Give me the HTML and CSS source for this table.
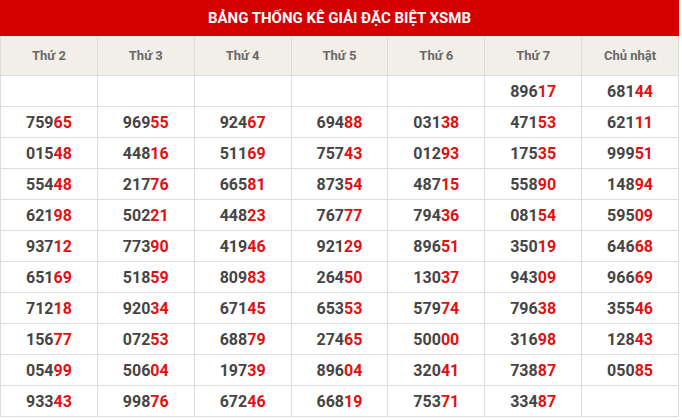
FILE: index.html
```html
<!DOCTYPE html>
<html lang="vi">
<head>
<meta charset="utf-8">
<link rel="stylesheet" href="styles.css">
</head>
<body>
<div class="box">
  <div class="title">BẢNG THỐNG KÊ GIẢI ĐẶC BIỆT XSMB</div>
  <table class="stats">
    <thead>
      <tr><th>Thứ 2</th><th>Thứ 3</th><th>Thứ 4</th><th>Thứ 5</th><th>Thứ 6</th><th>Thứ 7</th><th>Chủ nhật</th></tr>
    </thead>
    <tbody>
      <tr><td></td><td></td><td></td><td></td><td></td><td>896<em>17</em></td><td>681<em>44</em></td></tr>
      <tr><td>759<em>65</em></td><td>969<em>55</em></td><td>924<em>67</em></td><td>694<em>88</em></td><td>031<em>38</em></td><td>471<em>53</em></td><td>621<em>11</em></td></tr>
      <tr><td>015<em>48</em></td><td>448<em>16</em></td><td>511<em>69</em></td><td>757<em>43</em></td><td>012<em>93</em></td><td>175<em>35</em></td><td>999<em>51</em></td></tr>
      <tr><td>554<em>48</em></td><td>217<em>76</em></td><td>665<em>81</em></td><td>873<em>54</em></td><td>487<em>15</em></td><td>558<em>90</em></td><td>148<em>94</em></td></tr>
      <tr><td>621<em>98</em></td><td>502<em>21</em></td><td>448<em>23</em></td><td>767<em>77</em></td><td>794<em>36</em></td><td>081<em>54</em></td><td>595<em>09</em></td></tr>
      <tr><td>937<em>12</em></td><td>773<em>90</em></td><td>419<em>46</em></td><td>921<em>29</em></td><td>896<em>51</em></td><td>350<em>19</em></td><td>646<em>68</em></td></tr>
      <tr><td>651<em>69</em></td><td>518<em>59</em></td><td>809<em>83</em></td><td>264<em>50</em></td><td>130<em>37</em></td><td>943<em>09</em></td><td>966<em>69</em></td></tr>
      <tr><td>712<em>18</em></td><td>920<em>34</em></td><td>671<em>45</em></td><td>653<em>53</em></td><td>579<em>74</em></td><td>796<em>38</em></td><td>355<em>46</em></td></tr>
      <tr><td>156<em>77</em></td><td>072<em>53</em></td><td>688<em>79</em></td><td>274<em>65</em></td><td>500<em>00</em></td><td>316<em>98</em></td><td>128<em>43</em></td></tr>
      <tr><td>054<em>99</em></td><td>506<em>04</em></td><td>197<em>39</em></td><td>896<em>04</em></td><td>320<em>41</em></td><td>738<em>87</em></td><td>050<em>85</em></td></tr>
      <tr><td>933<em>43</em></td><td>998<em>76</em></td><td>672<em>46</em></td><td>668<em>19</em></td><td>753<em>71</em></td><td>334<em>87</em></td><td></td></tr>
    </tbody>
  </table>
</div>
</body>
</html>
```
FILE: styles.css
```css
html, body {
  margin: 0;
  padding: 0;
  background: #ffffff;
}
body {
  font-family: Roboto, "Liberation Sans", sans-serif;
}
.box {
  width: 679px;
}
.title {
  height: 36px;
  line-height: 36px;
  background: #d40000;
  color: #ffffff;
  font-weight: 700;
  font-size: 15px;
  text-align: center;
}
.stats {
  width: 679px;
  border-collapse: collapse;
  table-layout: fixed;
}
.stats th {
  height: 39px;
  padding: 0;
  background: #f2eee8;
  color: #6a6a6a;
  font-weight: 700;
  font-size: 13px;
  border: 1px solid #dddddd;
  border-top: none;
}
.stats td {
  height: 30px;
  padding: 0;
  text-align: center;
  font-weight: 700;
  font-size: 16px;
  color: #454545;
  border: 1px solid #dddddd;
}
.stats em {
  font-style: normal;
  color: #e31010;
}
```
